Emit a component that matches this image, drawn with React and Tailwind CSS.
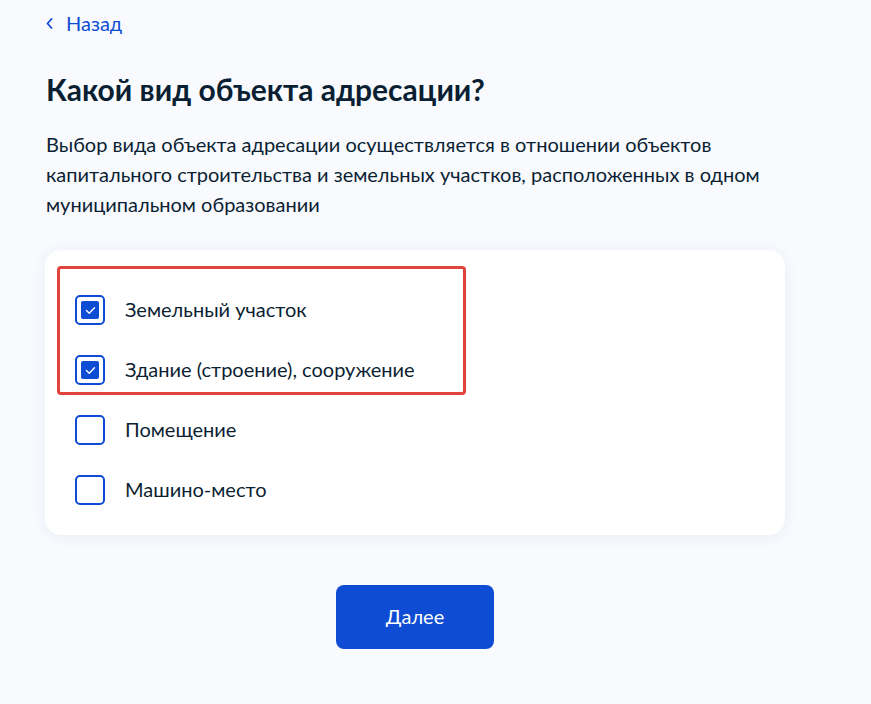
import React, { useState } from "react";

const options = [
    { id: "land", label: "Земельный участок" },
    { id: "building", label: "Здание (строение), сооружение" },
    { id: "room", label: "Помещение" },
    { id: "parking", label: "Машино-место" },
];

function Check({ checked, onToggle, label }) {
    return (
        <label className="flex items-center gap-[20px] cursor-pointer" onClick={onToggle}>
            <span className="flex h-[30px] w-[30px] shrink-0 items-center justify-center rounded-[5px] border-2 border-[#0d4cd3] bg-white">
                {checked && (
                    <span className="flex h-[18px] w-[18px] items-center justify-center rounded-[2px] bg-[#0d4cd3]">
                        <svg width="11" height="9" viewBox="0 0 11 9" fill="none">
                            <path d="M1.5 4.6L4.2 7.2L9.5 1.8" stroke="white" strokeWidth="1.4" strokeLinecap="round" strokeLinejoin="round" />
                        </svg>
                    </span>
                )}
            </span>
            <span className="pb-[3px] text-[20px] leading-[24px] text-[#0b1f33]">{label}</span>
        </label>
    );
}

export default function App() {
    const [checked, setChecked] = useState({ land: true, building: true });

    return (
        <div className="min-h-[704px] bg-[#f8fafe] font-['Lato','Liberation_Sans',sans-serif]">
            <div className="w-[740px] pl-[45px] pt-[11px] box-content">
                {/* back link */}
                <a href="#" className="ml-[1px] flex items-center gap-[13px] text-[20px] leading-[24px] text-[#0d4cd3]">
                    <svg width="7" height="11" viewBox="0 0 7 11" fill="none">
                        <path d="M5.5 1L1.5 5.5L5.5 10" stroke="#0d4cd3" strokeWidth="1.8" strokeLinecap="round" strokeLinejoin="round" />
                    </svg>
                    <span className="pb-[1px]">Назад</span>
                </a>

                <h1 className="ml-[1px] mt-[35px] text-[30px] leading-[36px] font-bold text-[#0b1f33]">
                    Какой вид объекта адресации?
                </h1>

                <p className="ml-[1px] mt-[22px] pr-[20px] text-[20px] leading-[30px] text-[#0b1f33]">
                    Выбор вида объекта адресации осуществляется в отношении объектов капитального строительства и земельных участков, расположенных в одном муниципальном образовании
                </p>

                <div className="relative mt-[31px] rounded-[16px] bg-white pl-[30px] pt-[45px] pb-[30px] shadow-[0_2px_14px_rgba(40,70,140,0.07)]">
                    <div className="flex flex-col gap-[30px]">
                        {options.map((o) => (
                            <Check
                                key={o.id}
                                label={o.label}
                                checked={!!checked[o.id]}
                                onToggle={(e) => {
                                    e.preventDefault();
                                    setChecked((c) => ({ ...c, [o.id]: !c[o.id] }));
                                }}
                            />
                        ))}
                    </div>
                    {/* highlight frame */}
                    <div className="pointer-events-none absolute left-[12px] top-[16px] h-[129px] w-[409px] rounded-[4px] border-[3px] border-[#e0443a]" />
                </div>

                <div className="mt-[50px] flex justify-center">
                    <button className="h-[64px] w-[158px] rounded-[8px] bg-[#0d4cd3] pb-[2px] text-[20px] text-white">
                        Далее
                    </button>
                </div>
            </div>
        </div>
    );
}
